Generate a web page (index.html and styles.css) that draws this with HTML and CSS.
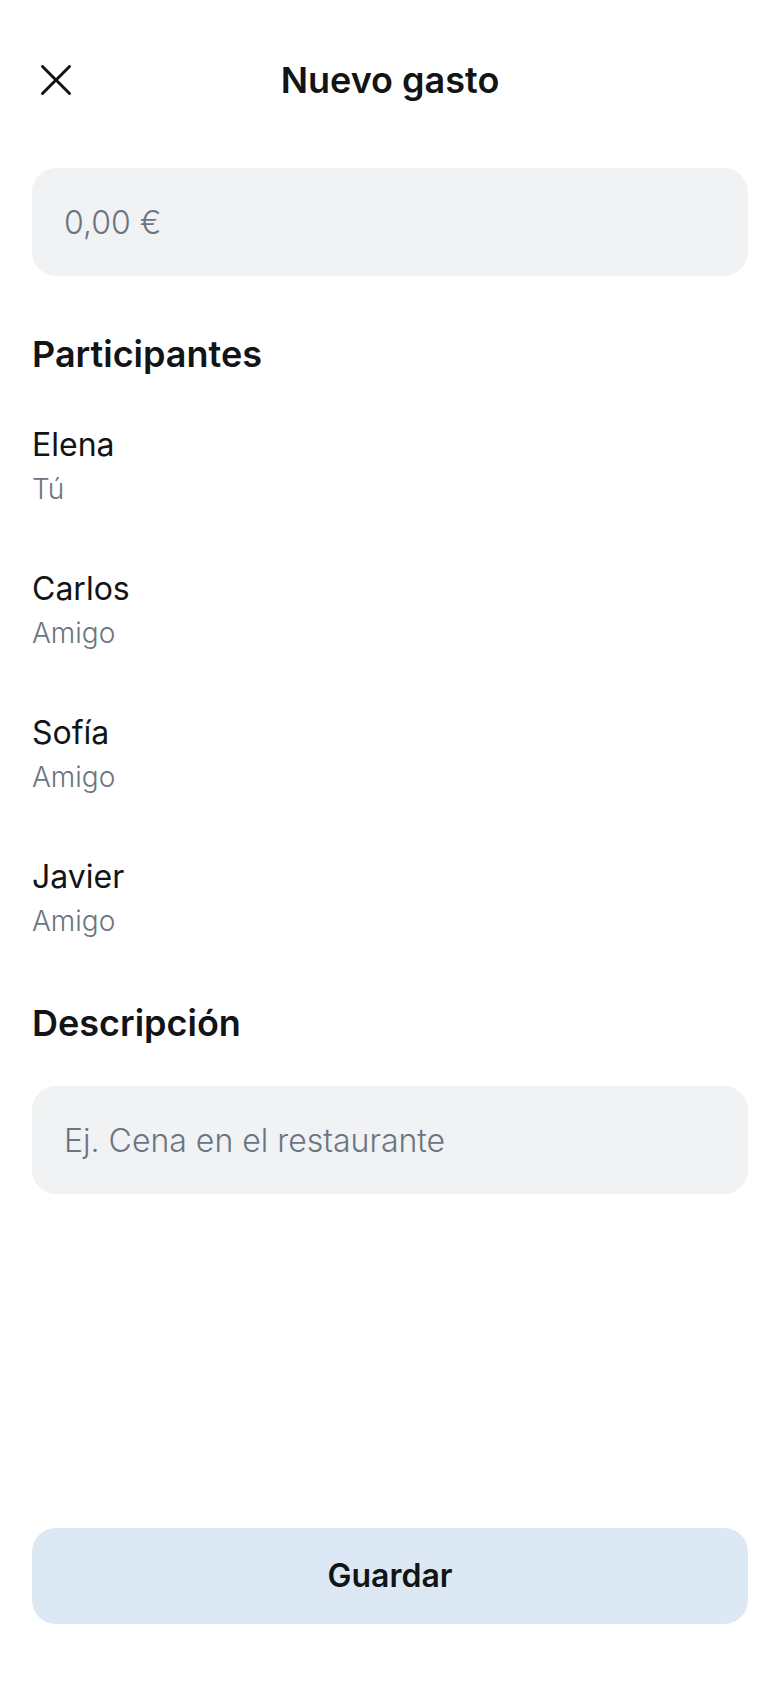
FILE: index.html
```html
<!DOCTYPE html>
<html lang="es">
<head>
<meta charset="utf-8">
<meta name="viewport" content="width=device-width, initial-scale=1">
<title>Nuevo gasto</title>
<link rel="stylesheet" href="styles.css">
</head>
<body>
<form class="screen">
  <header class="header">
    <button class="close" type="button" aria-label="Cerrar">
      <svg class="close-icon" viewBox="0 0 256 256" fill="currentColor" aria-hidden="true"><path d="M205.66,194.34a8,8,0,0,1-11.32,11.32L128,139.31,61.66,205.66a8,8,0,0,1-11.32-11.32L116.69,128,50.34,61.66A8,8,0,0,1,61.66,50.34L128,116.69l66.34-66.35a8,8,0,0,1,11.32,11.32L139.31,128Z"/></svg>
    </button>
    <h1 class="title">Nuevo gasto</h1>
  </header>
  <div class="field">
    <input class="input" type="text" placeholder="0,00 €" aria-label="Importe">
  </div>
  <h2 class="section-title">Participantes</h2>
  <ul class="people">
    <li class="person"><span class="name">Elena</span><span class="role">Tú</span></li>
    <li class="person"><span class="name">Carlos</span><span class="role">Amigo</span></li>
    <li class="person"><span class="name">Sofía</span><span class="role">Amigo</span></li>
    <li class="person"><span class="name">Javier</span><span class="role">Amigo</span></li>
  </ul>
  <h2 class="section-title"><label for="description">Descripción</label></h2>
  <div class="field">
    <input class="input" id="description" type="text" placeholder="Ej. Cena en el restaurante">
  </div>
  <footer class="footer">
    <button class="save" type="submit">Guardar</button>
  </footer>
</form>
</body>
</html>
```
FILE: styles.css
```css
* {
  box-sizing: border-box;
}

body {
  margin: 0;
  background: #fff;
  color: #121416;
  font-family: Inter, "Noto Sans", sans-serif;
}

.screen {
  display: flex;
  flex-direction: column;
  min-height: 100vh;
}

.header {
  display: flex;
  align-items: center;
  padding: 32px 32px 16px;
}

.close {
  display: flex;
  align-items: center;
  width: 96px;
  height: 96px;
  padding: 0;
  border: 0;
  background: none;
  color: inherit;
}

.close-icon {
  width: 48px;
  height: 48px;
}

.title {
  flex: 1;
  margin: 0;
  padding-right: 96px;
  font-size: 36px;
  font-weight: 600;
  line-height: 45px;
  text-align: center;
}

.field {
  padding: 24px 32px;
}

.input {
  display: block;
  width: 100%;
  height: 108px;
  padding: 0 32px;
  border: 0;
  border-radius: 24px;
  background: #f1f2f4;
  color: inherit;
  font: 300 32px/48px Inter, "Noto Sans", sans-serif;
}

.input::placeholder {
  color: #6a7581;
  opacity: 1;
}

.section-title {
  margin: 0;
  padding: 32px 32px 16px;
  font-size: 36px;
  font-weight: 600;
  line-height: 45px;
}

.people {
  margin: 0;
  padding: 0;
  list-style: none;
}

.person {
  display: flex;
  flex-direction: column;
  justify-content: center;
  min-height: 144px;
  padding: 16px 32px;
}

.name {
  font-size: 32px;
  font-weight: 400;
  line-height: 48px;
}

.role {
  color: #6a7581;
  font-size: 28px;
  font-weight: 300;
  line-height: 40px;
}

.footer {
  margin-top: auto;
  padding: 24px 32px 64px;
}

.save {
  display: block;
  width: 100%;
  height: 96px;
  border: 0;
  border-radius: 24px;
  background: #dce8f3;
  color: inherit;
  font: 600 32px/48px Inter, "Noto Sans", sans-serif;
}
```
